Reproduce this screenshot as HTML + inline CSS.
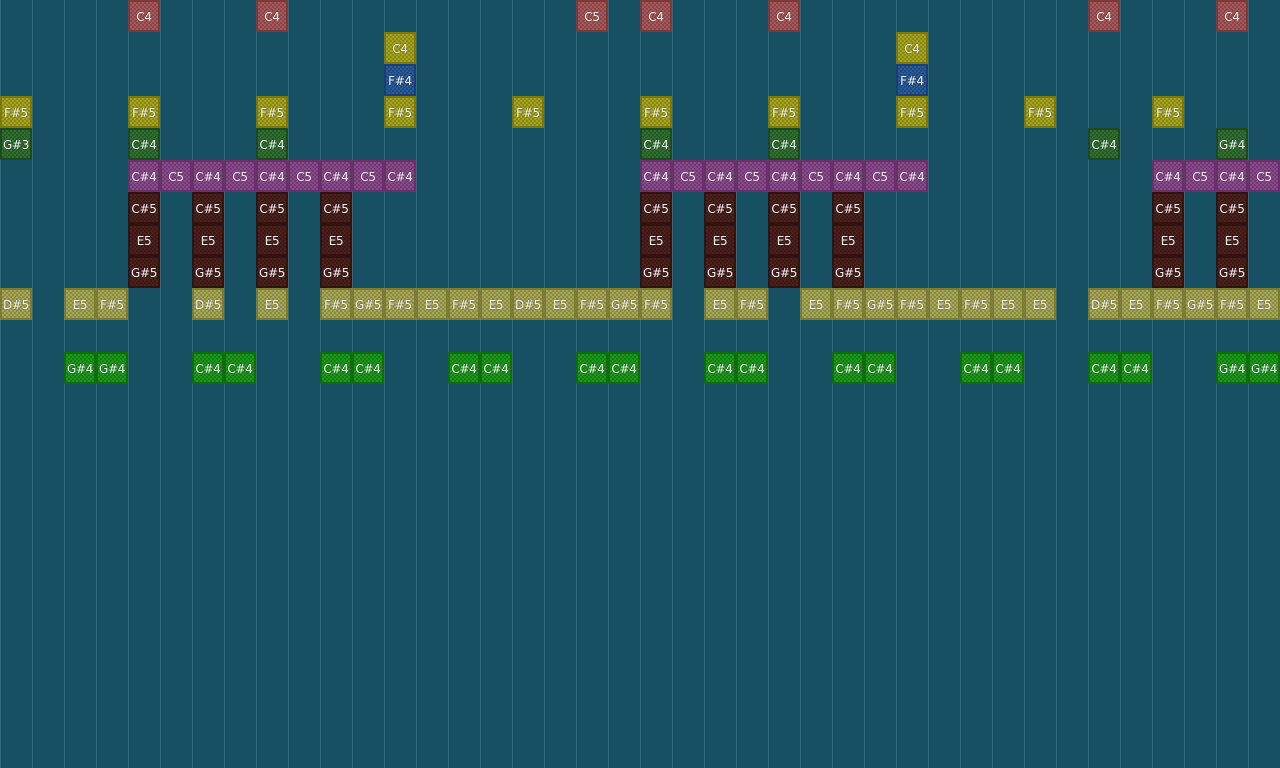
<!DOCTYPE html>
<html><head><style>
html,body{margin:0;padding:0}
body{width:1280px;height:768px;overflow:hidden;position:relative;background-color:#174f63;
background-image:linear-gradient(to right,#336a7c 0 1px,transparent 1px);background-size:32px 32px;}
i{position:absolute;width:32px;height:32px;box-sizing:border-box;border:2px solid;font-style:normal;
font:12px/30px "DejaVu Sans","Liberation Sans",sans-serif;color:#f2f2f2;text-align:center;letter-spacing:-0.3px;
background-image:repeating-conic-gradient(rgba(0,0,0,.16) 0 25%,transparent 0 50%);background-size:4px 4px;text-shadow:0 0 1px rgba(0,0,0,.5)}
.r{background-color:#a65656;border-color:#7c3a3a}
.y{background-color:#a4a21a;border-color:#7a780e}
.b{background-color:#26599a;border-color:#1a3f72}
.g{background-color:#2e6c30;border-color:#1e4a20}
.p{background-color:#88488a;border-color:#683268}
.d{background-color:#4a1f1c;border-color:#321310}
.o{background-color:#a6a652;border-color:#7c7c36}
.G{background-color:#1a981a;border-color:#0e6e0e}
</style></head><body>
<i class="r" style="left:128px;top:0">C4</i><i class="r" style="left:256px;top:0">C4</i><i class="r" style="left:576px;top:0">C5</i><i class="r" style="left:640px;top:0">C4</i><i class="r" style="left:768px;top:0">C4</i><i class="r" style="left:1088px;top:0">C4</i><i class="r" style="left:1216px;top:0">C4</i>
<i class="y" style="left:384px;top:32px">C4</i><i class="y" style="left:896px;top:32px">C4</i>
<i class="b" style="left:384px;top:64px">F#4</i><i class="b" style="left:896px;top:64px">F#4</i>
<i class="y" style="left:0;top:96px">F#5</i><i class="y" style="left:128px;top:96px">F#5</i><i class="y" style="left:256px;top:96px">F#5</i><i class="y" style="left:384px;top:96px">F#5</i><i class="y" style="left:512px;top:96px">F#5</i><i class="y" style="left:640px;top:96px">F#5</i><i class="y" style="left:768px;top:96px">F#5</i><i class="y" style="left:896px;top:96px">F#5</i><i class="y" style="left:1024px;top:96px">F#5</i><i class="y" style="left:1152px;top:96px">F#5</i>
<i class="g" style="left:0;top:128px">G#3</i><i class="g" style="left:128px;top:128px">C#4</i><i class="g" style="left:256px;top:128px">C#4</i><i class="g" style="left:640px;top:128px">C#4</i><i class="g" style="left:768px;top:128px">C#4</i><i class="g" style="left:1088px;top:128px">C#4</i><i class="g" style="left:1216px;top:128px">G#4</i>
<i class="p" style="left:128px;top:160px">C#4</i><i class="p" style="left:160px;top:160px">C5</i><i class="p" style="left:192px;top:160px">C#4</i><i class="p" style="left:224px;top:160px">C5</i><i class="p" style="left:256px;top:160px">C#4</i><i class="p" style="left:288px;top:160px">C5</i><i class="p" style="left:320px;top:160px">C#4</i><i class="p" style="left:352px;top:160px">C5</i><i class="p" style="left:384px;top:160px">C#4</i>
<i class="p" style="left:640px;top:160px">C#4</i><i class="p" style="left:672px;top:160px">C5</i><i class="p" style="left:704px;top:160px">C#4</i><i class="p" style="left:736px;top:160px">C5</i><i class="p" style="left:768px;top:160px">C#4</i><i class="p" style="left:800px;top:160px">C5</i><i class="p" style="left:832px;top:160px">C#4</i><i class="p" style="left:864px;top:160px">C5</i><i class="p" style="left:896px;top:160px">C#4</i>
<i class="p" style="left:1152px;top:160px">C#4</i><i class="p" style="left:1184px;top:160px">C5</i><i class="p" style="left:1216px;top:160px">C#4</i><i class="p" style="left:1248px;top:160px">C5</i>
<i class="d" style="left:128px;top:192px">C#5</i><i class="d" style="left:192px;top:192px">C#5</i><i class="d" style="left:256px;top:192px">C#5</i><i class="d" style="left:320px;top:192px">C#5</i><i class="d" style="left:640px;top:192px">C#5</i><i class="d" style="left:704px;top:192px">C#5</i><i class="d" style="left:768px;top:192px">C#5</i><i class="d" style="left:832px;top:192px">C#5</i><i class="d" style="left:1152px;top:192px">C#5</i><i class="d" style="left:1216px;top:192px">C#5</i>
<i class="d" style="left:128px;top:224px">E5</i><i class="d" style="left:192px;top:224px">E5</i><i class="d" style="left:256px;top:224px">E5</i><i class="d" style="left:320px;top:224px">E5</i><i class="d" style="left:640px;top:224px">E5</i><i class="d" style="left:704px;top:224px">E5</i><i class="d" style="left:768px;top:224px">E5</i><i class="d" style="left:832px;top:224px">E5</i><i class="d" style="left:1152px;top:224px">E5</i><i class="d" style="left:1216px;top:224px">E5</i>
<i class="d" style="left:128px;top:256px">G#5</i><i class="d" style="left:192px;top:256px">G#5</i><i class="d" style="left:256px;top:256px">G#5</i><i class="d" style="left:320px;top:256px">G#5</i><i class="d" style="left:640px;top:256px">G#5</i><i class="d" style="left:704px;top:256px">G#5</i><i class="d" style="left:768px;top:256px">G#5</i><i class="d" style="left:832px;top:256px">G#5</i><i class="d" style="left:1152px;top:256px">G#5</i><i class="d" style="left:1216px;top:256px">G#5</i>
<i class="o" style="left:0;top:288px">D#5</i><i class="o" style="left:64px;top:288px">E5</i><i class="o" style="left:96px;top:288px">F#5</i><i class="o" style="left:192px;top:288px">D#5</i><i class="o" style="left:256px;top:288px">E5</i><i class="o" style="left:320px;top:288px">F#5</i><i class="o" style="left:352px;top:288px">G#5</i><i class="o" style="left:384px;top:288px">F#5</i><i class="o" style="left:416px;top:288px">E5</i><i class="o" style="left:448px;top:288px">F#5</i><i class="o" style="left:480px;top:288px">E5</i><i class="o" style="left:512px;top:288px">D#5</i><i class="o" style="left:544px;top:288px">E5</i><i class="o" style="left:576px;top:288px">F#5</i><i class="o" style="left:608px;top:288px">G#5</i><i class="o" style="left:640px;top:288px">F#5</i><i class="o" style="left:704px;top:288px">E5</i><i class="o" style="left:736px;top:288px">F#5</i><i class="o" style="left:800px;top:288px">E5</i><i class="o" style="left:832px;top:288px">F#5</i><i class="o" style="left:864px;top:288px">G#5</i><i class="o" style="left:896px;top:288px">F#5</i><i class="o" style="left:928px;top:288px">E5</i><i class="o" style="left:960px;top:288px">F#5</i><i class="o" style="left:992px;top:288px">E5</i><i class="o" style="left:1024px;top:288px">E5</i><i class="o" style="left:1088px;top:288px">D#5</i><i class="o" style="left:1120px;top:288px">E5</i><i class="o" style="left:1152px;top:288px">F#5</i><i class="o" style="left:1184px;top:288px">G#5</i><i class="o" style="left:1216px;top:288px">F#5</i><i class="o" style="left:1248px;top:288px">E5</i>
<i class="G" style="left:64px;top:352px">G#4</i><i class="G" style="left:96px;top:352px">G#4</i><i class="G" style="left:192px;top:352px">C#4</i><i class="G" style="left:224px;top:352px">C#4</i><i class="G" style="left:320px;top:352px">C#4</i><i class="G" style="left:352px;top:352px">C#4</i><i class="G" style="left:448px;top:352px">C#4</i><i class="G" style="left:480px;top:352px">C#4</i><i class="G" style="left:576px;top:352px">C#4</i><i class="G" style="left:608px;top:352px">C#4</i><i class="G" style="left:704px;top:352px">C#4</i><i class="G" style="left:736px;top:352px">C#4</i><i class="G" style="left:832px;top:352px">C#4</i><i class="G" style="left:864px;top:352px">C#4</i><i class="G" style="left:960px;top:352px">C#4</i><i class="G" style="left:992px;top:352px">C#4</i><i class="G" style="left:1088px;top:352px">C#4</i><i class="G" style="left:1120px;top:352px">C#4</i><i class="G" style="left:1216px;top:352px">G#4</i><i class="G" style="left:1248px;top:352px">G#4</i>
</body></html>
